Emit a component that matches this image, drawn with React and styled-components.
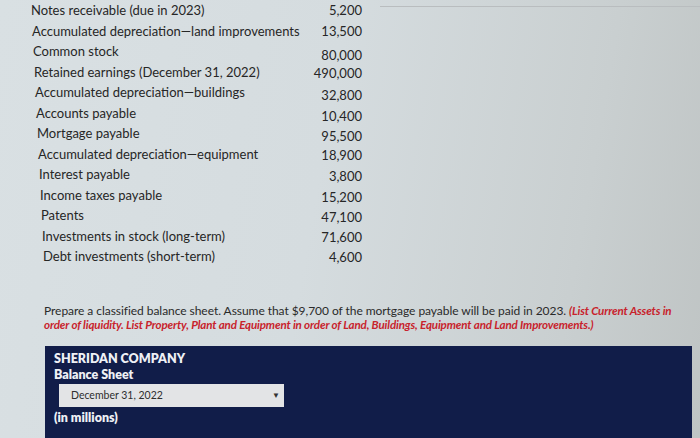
import styled, { createGlobalStyle } from 'styled-components';

const Global = createGlobalStyle`
  html, body {
    margin: 0;
    height: 100%;
    overflow: hidden;
  }
  body {
    font-family: Lato, "Open Sans", sans-serif;
    background: linear-gradient(100deg, #d9e0e3 0%, #d5dcdf 45%, #c9cfd0 80%, #bfc4c4 100%);
    color: #262626;
  }
`;

const Page = styled.div`
  position: relative;
  width: 700px;
  height: 438px;
  overflow: hidden;
`;

const TopRule = styled.div`
  height: 1px;
  margin: 0 0 0 380px;
  background: #b9bdbf;
  transform: translateY(6px);
`;

const AccountList = styled.div`
  display: flex;
  flex-direction: column;
  width: 331px;
  margin: -1px 0 0 31px;
`;

const Row = styled.div`
  display: flex;
  justify-content: space-between;
  align-items: center;
  height: 20.5px;
  font-size: 13px;
  padding-left: ${(p) => p.$indent}px;
`;

const Amount = styled.span`
  text-align: right;
  transform: translateY(${(p) => p.$shift}px);
`;

const Instructions = styled.p`
  margin: 37px 0 0 44px;
  width: 636px;
  font-size: 12px;
  line-height: 14px;
  letter-spacing: -0.05px;
  color: #2a2a2a;
`;

const Hint = styled.em`
  color: #c8232c;
  font-weight: 700;
  font-size: 11.6px;
  letter-spacing: -0.15px;
`;

const Panel = styled.div`
  margin: 14px 0 0 45px;
  width: 647px;
  height: 100px;
  background: #111d49;
  padding: 5px 9px;
  box-sizing: border-box;
  color: #eef0f5;
  font-weight: 800;
`;

const Heading = styled.div`
  font-size: 12.5px;
  line-height: 16px;
`;

const DateSelect = styled.div`
  display: flex;
  justify-content: space-between;
  align-items: center;
  width: 225px;
  height: 23px;
  margin: 1px 0 3px 5px;
  padding: 0 4px 0 12px;
  box-sizing: border-box;
  background: #e3e4e6;
  color: #2e2e2e;
  font-weight: 400;
  font-size: 10.5px;
`;

const Caret = styled.span`
  font-size: 8px;
  color: #333;
`;

const rows = [
  ['Notes receivable (due in 2023)', '5,200', 0, 0],
  ['Accumulated depreciation\u2014land improvements', '13,500', 1, 0],
  ['Common stock', '80,000', 2, 4],
  ['Retained earnings (December 31, 2022)', '490,000', 3, 1],
  ['Accumulated depreciation\u2014buildings', '32,800', 4, 3],
  ['Accounts payable', '10,400', 5, 3],
  ['Mortgage payable', '95,500', 6, 3],
  ['Accumulated depreciation\u2014equipment', '18,900', 7, 1],
  ['Interest payable', '3,800', 8, 2],
  ['Income taxes payable', '15,200', 9, 2],
  ['Patents', '47,100', 10, 2],
  ['Investments in stock (long-term)', '71,600', 11, 1],
  ['Debt investments (short-term)', '4,600', 12, 1],
];

export default function App() {
  return (
    <>
      <Global />
      <Page>
        <TopRule />
        <AccountList>
          {rows.map(([label, amount, indent, shift]) => (
            <Row key={label} $indent={indent}>
              <span>{label}</span>
              <Amount $shift={shift}>{amount}</Amount>
            </Row>
          ))}
        </AccountList>
        <Instructions>
          Prepare a classified balance sheet. Assume that $9,700 of the mortgage payable will be paid in 2023.{' '}
          <Hint>
            (List Current Assets in order of liquidity. List Property, Plant and Equipment in order of Land,
            Buildings, Equipment and Land Improvements.)
          </Hint>
        </Instructions>
        <Panel>
          <Heading>SHERIDAN COMPANY</Heading>
          <Heading>Balance Sheet</Heading>
          <DateSelect>
            <span>December 31, 2022</span>
            <Caret>▼</Caret>
          </DateSelect>
          <Heading>(in millions)</Heading>
        </Panel>
      </Page>
    </>
  );
}
